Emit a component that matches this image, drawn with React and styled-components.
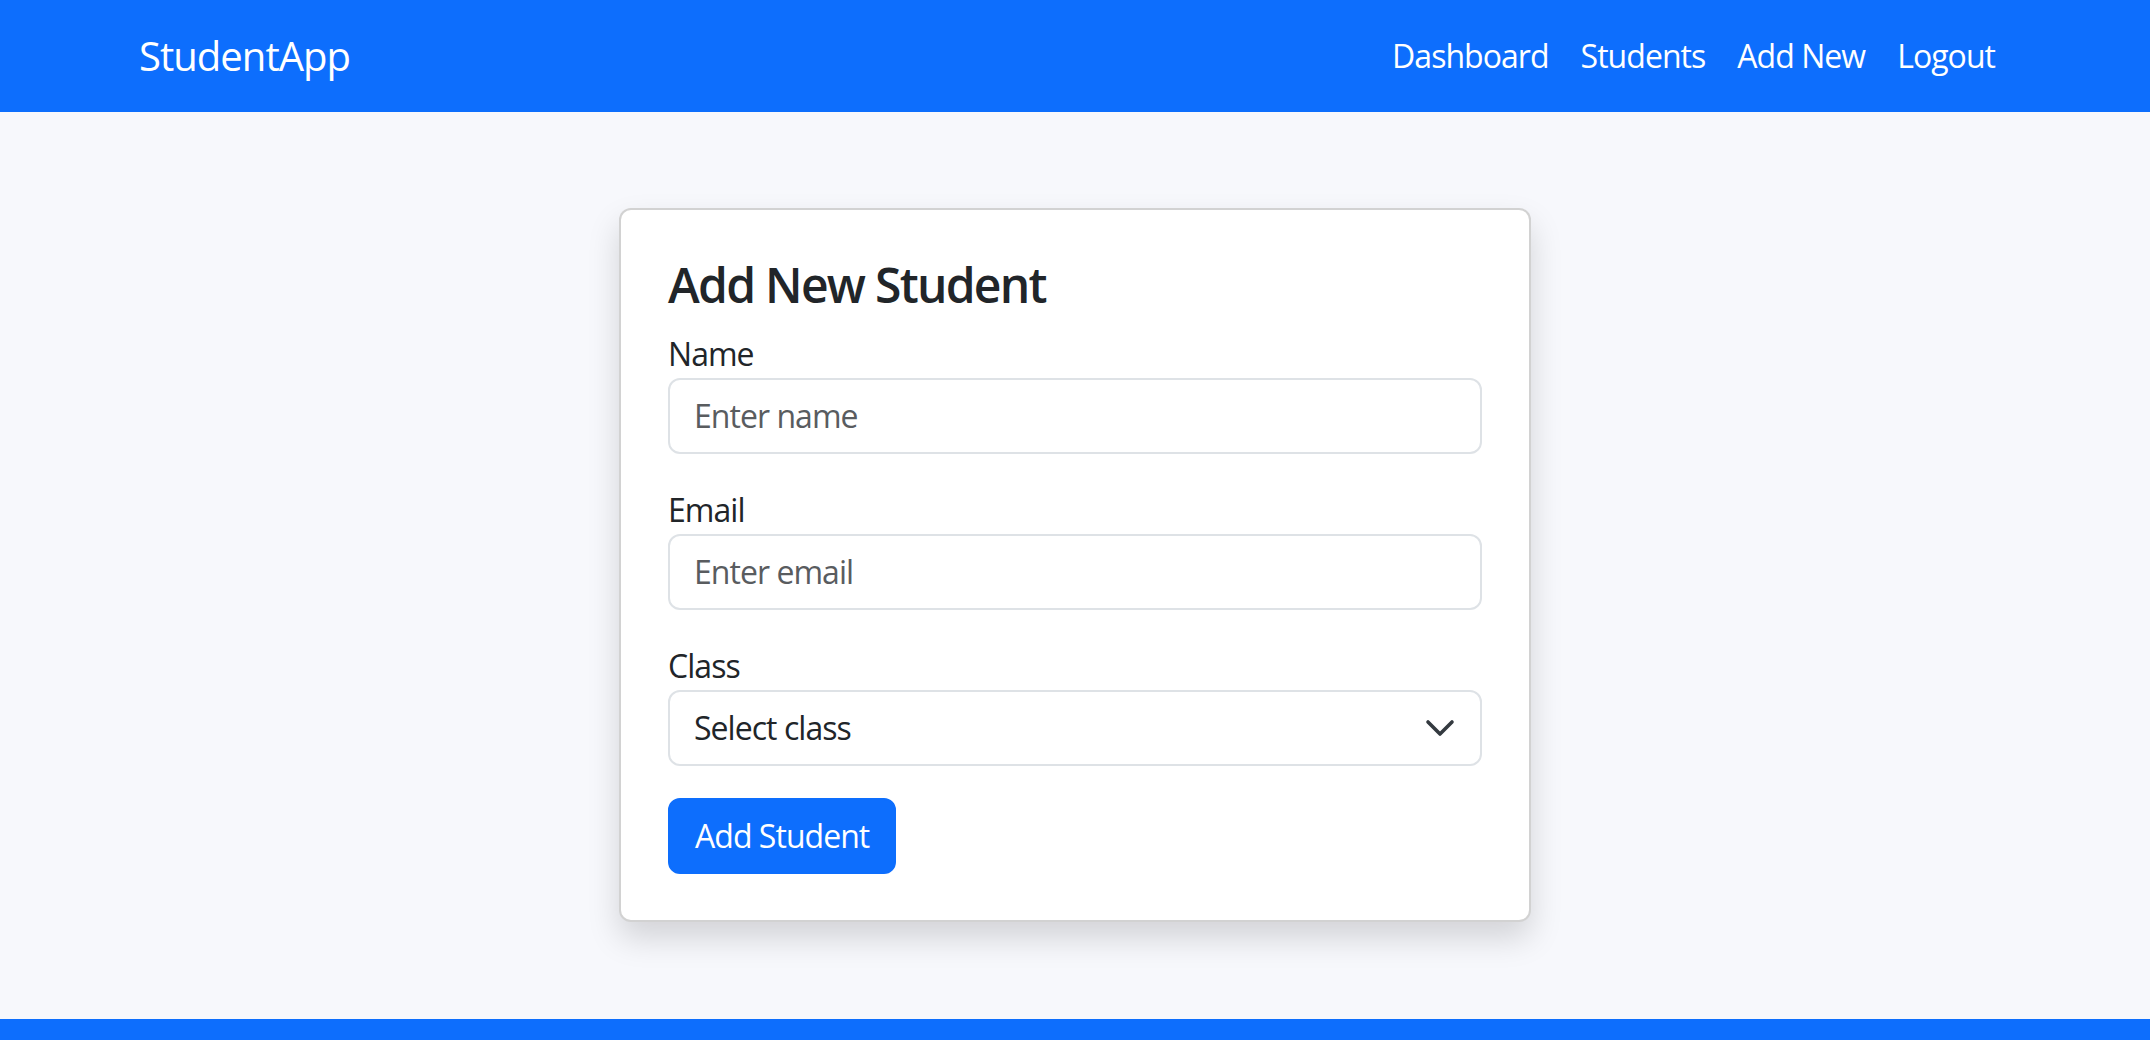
import React from 'react';
import styled, { createGlobalStyle } from 'styled-components';

const GlobalStyle = createGlobalStyle`
  * {
    box-sizing: border-box;
  }
  body {
    margin: 0;
    font-family: 'Open Sans', 'Noto Sans', sans-serif;
    font-size: 32px;
    line-height: 1.5;
    letter-spacing: -0.03em;
    color: #212529;
    background-color: #f7f8fc;
  }
`;

const Navbar = styled.nav`
  background-color: #0d6efd;
  padding: 16px 0;
`;

const NavInner = styled.div`
  max-width: 1920px;
  margin: 0 auto;
  padding: 0 24px;
  height: 80px;
  display: flex;
  align-items: center;
  justify-content: space-between;
`;

const Brand = styled.a`
  color: #fff;
  font-size: 40px;
  line-height: 1.5;
  text-decoration: none;
`;

const NavLinks = styled.ul`
  display: flex;
  list-style: none;
  margin: 0;
  padding: 0;
`;

const NavLink = styled.a`
  display: block;
  padding: 16px;
  color: #fff;
  text-decoration: none;
  line-height: 48px;
`;

const Main = styled.main`
  padding: 96px 24px 97px;
`;

const Card = styled.div`
  max-width: 912px;
  margin: 0 auto;
  background: #fff;
  border: 2px solid rgba(0, 0, 0, 0.175);
  border-radius: 12px;
  box-shadow: 0 16px 32px rgba(0, 0, 0, 0.15);
  padding: 46px 47px;
`;

const Title = styled.h4`
  margin: 0 0 16px;
  font-size: 48px;
  font-weight: 600;
  line-height: 1.2;
  letter-spacing: -0.036em;
`;

const Field = styled.div`
  margin-bottom: ${(p) => (p.$last ? '0' : '32px')};
`;

const Label = styled.label`
  display: block;
  line-height: 48px;
`;

const Input = styled.input`
  display: block;
  width: 100%;
  height: 76px;
  padding: 12px 24px;
  font: inherit;
  letter-spacing: inherit;
  color: #212529;
  background: #fff;
  border: 2px solid #dee2e6;
  border-radius: 12px;
  outline: none;

  &::placeholder {
    color: #595c5f;
  }
`;

const SelectWrap = styled.div`
  position: relative;
`;

const Select = styled.select`
  display: block;
  width: 100%;
  height: 76px;
  padding: 12px 80px 12px 24px;
  font: inherit;
  letter-spacing: inherit;
  color: #212529;
  background: #fff;
  border: 2px solid #dee2e6;
  border-radius: 12px;
  appearance: none;
  outline: none;
`;

const Chevron = styled.svg`
  position: absolute;
  right: 26px;
  top: 50%;
  margin-top: -16px;
  width: 32px;
  height: 32px;
  pointer-events: none;
`;

const Button = styled.button`
  margin-top: 32px;
  height: 76px;
  padding: 12px 25px;
  font: inherit;
  letter-spacing: inherit;
  color: #fff;
  background-color: #0d6efd;
  border: 2px solid #0d6efd;
  border-radius: 12px;
  cursor: pointer;
`;

const Footer = styled.footer`
  background-color: #0d6efd;
  height: 112px;
`;

const links = ['Dashboard', 'Students', 'Add New', 'Logout'];

const App = () => {
  return (
    <>
      <GlobalStyle />
      <Navbar>
        <NavInner>
          <Brand href="#">StudentApp</Brand>
          <NavLinks>
            {links.map((link) => (
              <li key={link}>
                <NavLink href="#">{link}</NavLink>
              </li>
            ))}
          </NavLinks>
        </NavInner>
      </Navbar>
      <Main>
        <Card>
          <Title>Add New Student</Title>
          <form onSubmit={(e) => e.preventDefault()}>
            <Field>
              <Label htmlFor="name">Name</Label>
              <Input id="name" type="text" placeholder="Enter name" />
            </Field>
            <Field>
              <Label htmlFor="email">Email</Label>
              <Input id="email" type="email" placeholder="Enter email" />
            </Field>
            <Field $last>
              <Label htmlFor="class">Class</Label>
              <SelectWrap>
                <Select id="class" defaultValue="">
                  <option value="">Select class</option>
                  <option value="10">Class 10</option>
                  <option value="11">Class 11</option>
                  <option value="12">Class 12</option>
                </Select>
                <Chevron viewBox="0 0 16 16">
                  <path
                    d="M2 5l6 6 6-6"
                    fill="none"
                    stroke="#343a40"
                    strokeWidth="1.8"
                    strokeLinecap="round"
                    strokeLinejoin="round"
                  />
                </Chevron>
              </SelectWrap>
            </Field>
            <Button type="submit">Add Student</Button>
          </form>
        </Card>
      </Main>
      <Footer />
    </>
  );
};

export default App;
